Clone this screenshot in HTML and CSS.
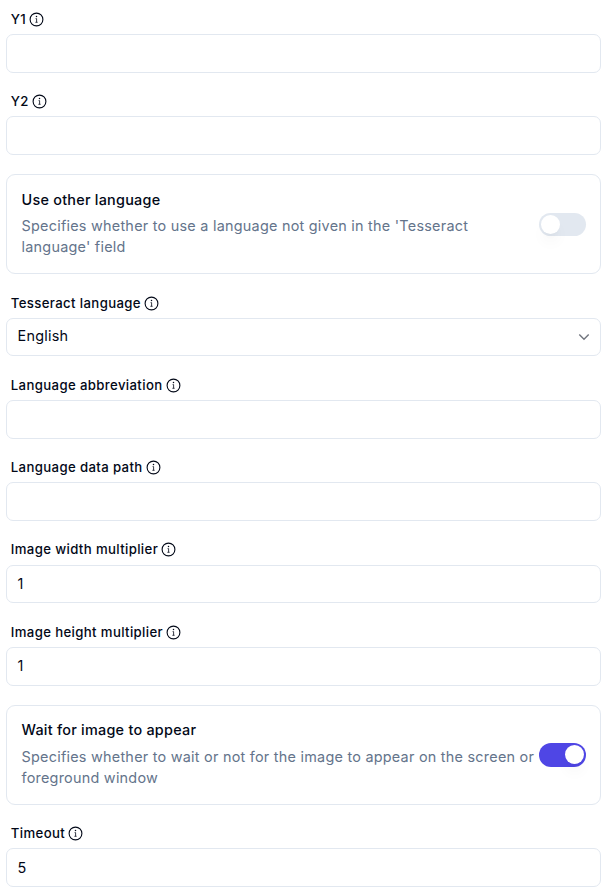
FILE: index.html
```html
<!DOCTYPE html>
<html lang="en">
<head>
<meta charset="utf-8">
<title>Image text settings</title>
<link rel="stylesheet" href="styles.css">
</head>
<body>
<svg width="0" height="0" class="defs">
  <symbol id="info" viewBox="0 0 15 15"><circle cx="7.5" cy="7.5" r="6.4" fill="none" stroke="currentColor" stroke-width="1.1"/><path d="M6.6 6.6h1v3.6M6.4 10.3h2.2" fill="none" stroke="currentColor" stroke-width=".8"/><circle cx="7.5" cy="4.6" r=".75" fill="currentColor"/></symbol>
</svg>
<form class="form">
  <div class="field"><div class="label">Y1<svg class="info"><use href="#info"/></svg></div><div class="input"></div></div>
  <div class="field"><div class="label">Y2<svg class="info"><use href="#info"/></svg></div><div class="input"></div></div>
  <div class="card">
    <div class="copy"><div class="title">Use other language</div><div class="desc">Specifies whether to use a language not given in the 'Tesseract language' field</div></div>
    <div class="switch"><span class="thumb"></span></div>
  </div>
  <div class="field short"><div class="label">Tesseract language<svg class="info"><use href="#info"/></svg></div><div class="input select"><span>English</span><svg class="chevron" viewBox="0 0 12 8"><path d="M1.3 1.5 6 6.2l4.7-4.7" fill="none" stroke="currentColor" stroke-width="1.4"/></svg></div></div>
  <div class="field"><div class="label">Language abbreviation<svg class="info"><use href="#info"/></svg></div><div class="input"></div></div>
  <div class="field"><div class="label">Language data path<svg class="info"><use href="#info"/></svg></div><div class="input"></div></div>
  <div class="field short raised"><div class="label">Image width multiplier<svg class="info"><use href="#info"/></svg></div><div class="input">1</div></div>
  <div class="field"><div class="label">Image height multiplier<svg class="info"><use href="#info"/></svg></div><div class="input number">1</div></div>
  <div class="card last">
    <div class="copy"><div class="title">Wait for image to appear</div><div class="desc">Specifies whether to wait or not for the image to appear on the screen or foreground window</div></div>
    <div class="switch on"><span class="thumb"></span></div>
  </div>
  <div class="field"><div class="label">Timeout<svg class="info"><use href="#info"/></svg></div><div class="input">5</div></div>
</form>
</body>
</html>
```
FILE: styles.css
```css
* { box-sizing: border-box; }
body {
  margin: 0;
  background: #fff;
  color: #020817;
  font-family: Inter, "Liberation Sans", sans-serif;
  letter-spacing: 0.25px;
}
.defs { position: absolute; }
.form { padding: 10px 9px 0 6px; }
.field { margin-bottom: 19px; }
.label {
  display: flex;
  align-items: center;
  gap: 3px;
  height: 18px;
  margin-bottom: 6px;
  padding-left: 4.8px;
  font-size: 13.2px;
  font-weight: 500;
  line-height: 18px;
  letter-spacing: 0.36px;
}
.info { width: 15px; height: 15px; margin-top: 1px; }
.input {
  display: flex;
  align-items: center;
  height: 39px;
  padding: 0 10px 0 10.5px;
  border: 1px solid #e2e8f0;
  border-radius: 7px;
  font-size: 14.4px;
}
.short { margin-bottom: 20px; }
.short .input { height: 38px; }
.raised .label { margin-bottom: 7px; }
.raised .input, .number { padding-bottom: 2px; }
.input.select { justify-content: space-between; padding-bottom: 3px; }
.chevron { width: 12px; height: 8px; margin-top: 3px; color: #71757e; }
.card {
  display: flex;
  align-items: center;
  justify-content: space-between;
  height: 100px;
  margin-bottom: 20px;
  padding: 0 14px 0 14.5px;
  border: 1px solid #e2e8f0;
  border-radius: 9px;
}
.copy { padding: 0 4px 2px 0; }
.last { margin-bottom: 19px; }
.title { margin-bottom: 5px; font-size: 14.4px; font-weight: 500; line-height: 21px; }
.last .title { margin-bottom: 6px; }
.last .copy { padding-bottom: 3px; }
.desc { color: #64748b; font-size: 14.4px; line-height: 21px; }
.switch {
  flex: none;
  width: 47px;
  height: 23px;
  margin-top: 1px;
  padding: 2px;
  border-radius: 12px;
  background: #e2e8f0;
}
.thumb {
  display: block;
  width: 19px;
  height: 19px;
  border-radius: 50%;
  background: #fff;
  box-shadow: 0 10px 15px -3px rgb(0 0 0 / 0.06), 0 4px 6px -4px rgb(0 0 0 / 0.05);
}
.switch.on { height: 24px; margin-top: 0; background: #4f46e5; }
.on .thumb { margin-left: 24px; }
```
